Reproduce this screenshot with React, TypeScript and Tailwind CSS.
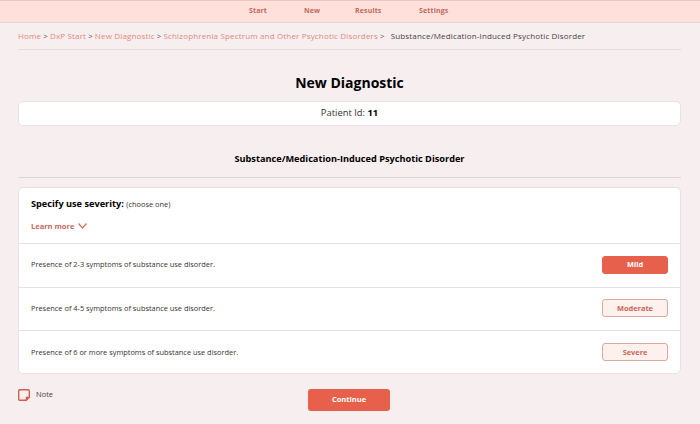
const severities = [
  { text: "Presence of 2-3 symptoms of substance use disorder.", label: "Mild", active: true },
  { text: "Presence of 4-5 symptoms of substance use disorder.", label: "Moderate", active: false },
  { text: "Presence of 6 or more symptoms of substance use disorder.", label: "Severe", active: false },
];

const crumbs = [
  "Home",
  "DxP Start",
  "New Diagnostic",
  "Schizophrenia Spectrum and Other Psychotic Disorders",
];

export default function App() {
  return (
    <main className="h-[424px] w-[700px] overflow-hidden bg-[#f7eeef] font-['Open_Sans',sans-serif] text-[#222]">
      <TopNav />

      <div className="pr-[19px] pl-[18px]">
        <Breadcrumb />

        <h1 className="mt-[22px] text-center text-sm leading-[22px] font-bold text-black">
          New Diagnostic
        </h1>

        <div className="mt-[7px] flex h-[25px] items-center justify-center rounded-[5px] border border-[#e8e2e2] bg-white text-[9.4px] text-[#333]">
          Patient Id:&nbsp;<b className="text-black">11</b>
        </div>

        <h2 className="mt-[26px] border-b border-[#ddd6d8] pb-3 text-center text-[9.2px] leading-[13px] font-bold text-black">
          Substance/Medication-Induced Psychotic Disorder
        </h2>

        <section className="mt-[9px] h-[187px] rounded-[5px] border border-[#e8e2e2] bg-white">
          <div className="h-[56px] border-b border-[#e6e1e1] px-3 pt-[9px]">
            <p className="text-[9.2px] leading-[14px] text-black">
              <b>Specify use severity:</b>{" "}
              <span className="text-[7.4px] text-[#333]">(choose one)</span>
            </p>
            <div className="mt-2 flex items-center gap-[4px] text-[7.5px] leading-[14px] font-bold text-[#c26a5e]">
              Learn more
              <svg width="9" height="6" viewBox="0 0 9 6" fill="none" stroke="#d4705f" strokeWidth="1.2">
                <path d="M0.5 0.5 L4.5 5 L8.5 0.5" />
              </svg>
            </div>
          </div>

          {severities.map((row) => (
            <SeverityRow key={row.label} {...row} />
          ))}
        </section>

        <div className="relative mt-[15px] h-[22px]">
          <div className="absolute top-0 left-0 flex items-center gap-[6px] text-[7.5px] text-[#444]">
            <NoteIcon />
            <span className="-mt-px">Note</span>
          </div>
          <button className="ml-[290px] block h-[22px] w-[82px] rounded-[3px] bg-[#e6604c] text-[7.5px] font-bold text-white">
            Continue
          </button>
        </div>
      </div>
    </main>
  );
}

function TopNav() {
  return (
    <nav className="flex h-[23px] items-center border-t border-b border-t-[#e6c8c2] border-b-[#ecd5d0] bg-[#ffe0da] pl-[249px] text-[7px] font-bold tracking-[0.02em] text-[#c4685a]">
      <span className="w-[55px]">Start</span>
      <span className="w-[51px]">New</span>
      <span className="w-[64px]">Results</span>
      <span>Settings</span>
    </nav>
  );
}

function Breadcrumb() {
  return (
    <div className="flex h-[27px] items-center border-b border-[#e2dcde] pb-[1px] text-[8px] tracking-[0.02em] whitespace-nowrap text-[#df8a7c]">
      {crumbs.map((crumb) => (
        <span key={crumb}>
          {crumb}
          <span className="mx-[2px] text-[#555]">&gt;</span>
        </span>
      ))}
      <span className="ml-[4px] text-[#444]">Substance/Medication-Induced Psychotic Disorder</span>
    </div>
  );
}

function SeverityRow({ text, label, active }: { text: string; label: string; active: boolean }) {
  return (
    <div className="flex h-[43.5px] items-center justify-between border-b border-[#e6e1e1] px-3 pb-px text-[7.4px] text-[#333] last:border-b-0">
      {text}
      <button
        className={`h-[18px] w-[66px] rounded-[3px] border text-[7.4px] font-bold ${
          active
            ? "border-[#e6604c] bg-[#e6604c] text-white"
            : "border-[#d9a9a2] bg-[#fdf0ed] text-[#c8675a]"
        }`}
      >
        {label}
      </button>
    </div>
  );
}

function NoteIcon() {
  return (
    <svg width="12" height="12" viewBox="0 0 12 12" fill="none" stroke="#d0604e" strokeWidth="1.4">
      <path d="M2 0.7 H10 Q11.3 0.7 11.3 2 V8 L8 11.3 H2 Q0.7 11.3 0.7 10 V2 Q0.7 0.7 2 0.7 Z" />
      <path d="M11 8.4 H8.4 V11 Z" fill="#d0604e" />
    </svg>
  );
}
